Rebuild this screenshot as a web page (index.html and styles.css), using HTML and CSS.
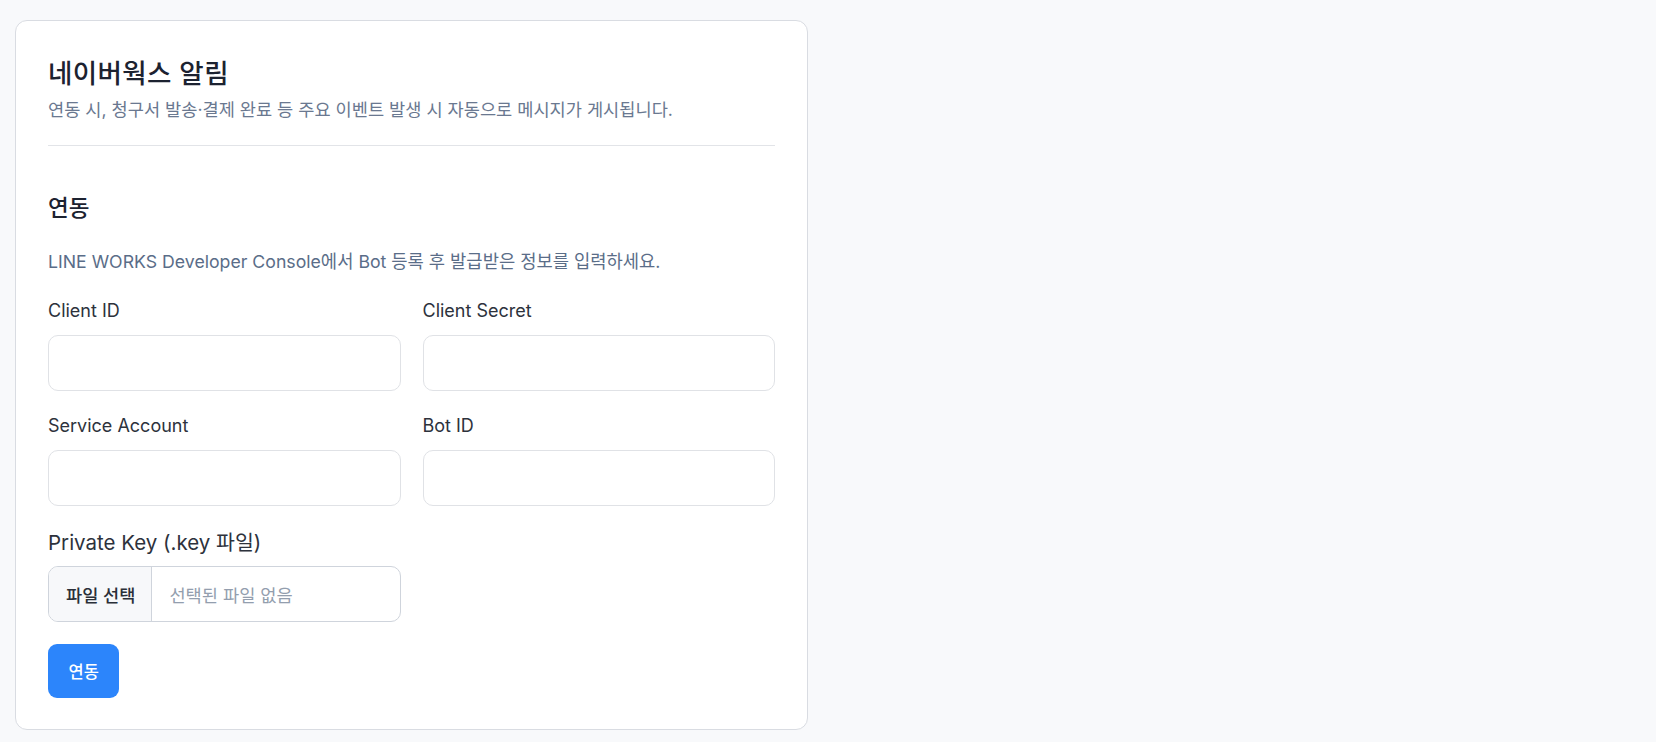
FILE: index.html
```html
<!DOCTYPE html>
<html lang="ko">
<head>
    <meta charset="UTF-8">
    <meta name="viewport" content="width=device-width, initial-scale=1.0">
    <title>네이버웍스 알림</title>
    <link rel="stylesheet" href="styles.css">
</head>
<body>
    <div class="page">
        <div class="card">
            <div class="card-header">
                <h1 class="card-title">네이버웍스 알림</h1>
                <p class="card-desc">연동 시, 청구서 발송·결제 완료 등 주요 이벤트 발생 시 자동으로 메시지가 게시됩니다.</p>
            </div>

            <h2 class="section-title">연동</h2>
            <p class="section-desc">LINE WORKS Developer Console에서 Bot 등록 후 발급받은 정보를 입력하세요.</p>

            <div class="form-grid">
                <div class="field">
                    <label class="field-label" for="client-id">Client ID</label>
                    <input class="field-input" type="text" id="client-id">
                </div>
                <div class="field">
                    <label class="field-label" for="client-secret">Client Secret</label>
                    <input class="field-input" type="text" id="client-secret">
                </div>
                <div class="field">
                    <label class="field-label" for="service-account">Service Account</label>
                    <input class="field-input" type="text" id="service-account">
                </div>
                <div class="field">
                    <label class="field-label" for="bot-id">Bot ID</label>
                    <input class="field-input" type="text" id="bot-id">
                </div>
                <div class="field">
                    <label class="field-label field-label-lg" for="private-key">Private Key (.key 파일)</label>
                    <label class="file-input" for="private-key">
                        <span class="file-btn">파일 선택</span>
                        <span class="file-name">선택된 파일 없음</span>
                    </label>
                    <input class="file-hidden" type="file" id="private-key" accept=".key">
                </div>
            </div>

            <button class="btn-primary" type="button">연동</button>
        </div>
    </div>
</body>
</html>
```

FILE: styles.css
```css
* {
    box-sizing: border-box;
}
body {
    margin: 0;
    background-color: #f8f9fb;
    font-family: Inter, "Noto Sans CJK KR", sans-serif;
    color: #2d323c;
}
.page {
    padding: 20px 15px;
}
.card {
    width: 793px;
    background: white;
    border: 1px solid #d9dce2;
    border-radius: 12px;
    padding: 34px 32px 31px 32px;
}
.card-header {
    padding-bottom: 23px;
    border-bottom: 1px solid #e2e4e8;
}
.card-title {
    margin: 0;
    font-size: 26.5px;
    line-height: 36px;
    font-weight: 500;
    letter-spacing: 0.4px;
    color: #1c2230;
}
.card-desc {
    margin: 7px 0 0;
    font-size: 17.6px;
    line-height: 24px;
    color: #6a7890;
}
.section-title {
    margin: 46px 0 0;
    font-size: 22.5px;
    line-height: 32px;
    font-weight: 500;
    color: #1c2230;
}
.section-desc {
    margin: 25px 0 0;
    font-size: 17.7px;
    line-height: 26px;
    color: #5a6d88;
}
.form-grid {
    display: grid;
    grid-template-columns: 1fr 1fr;
    column-gap: 22px;
    margin-top: 23px;
}
.field {
    margin-bottom: 22px;
}
.field-label {
    display: block;
    font-size: 18px;
    line-height: 26px;
    margin-bottom: 11px;
    color: #2d323c;
}
.field-label-lg {
    font-size: 20.5px;
    line-height: 30px;
    margin-bottom: 8px;
}
.field-input {
    display: block;
    width: 100%;
    height: 56px;
    border: 1px solid #e0e2e6;
    border-radius: 10px;
    padding: 0 16px;
    font: inherit;
    font-size: 17.6px;
    background: white;
}
.file-input {
    display: flex;
    height: 56px;
    border: 1px solid #cfd4dc;
    border-radius: 10px;
    overflow: hidden;
    cursor: pointer;
}
.file-btn {
    display: flex;
    align-items: center;
    padding: 0 16px 0 17px;
    background: #f7f8fa;
    border-right: 1px solid #cfd4dc;
    font-size: 17.6px;
    font-weight: 500;
    color: #2a2f38;
}
.file-name {
    display: flex;
    align-items: center;
    padding-left: 17px;
    font-size: 17.6px;
    color: #939eae;
}
.file-hidden {
    display: none;
}
.btn-primary {
    display: block;
    height: 54px;
    padding: 0 20.5px;
    border: none;
    border-radius: 9px;
    background: #2c85fb;
    color: white;
    font-family: inherit;
    font-size: 16.5px;
    font-weight: 500;
    cursor: pointer;
}
```
